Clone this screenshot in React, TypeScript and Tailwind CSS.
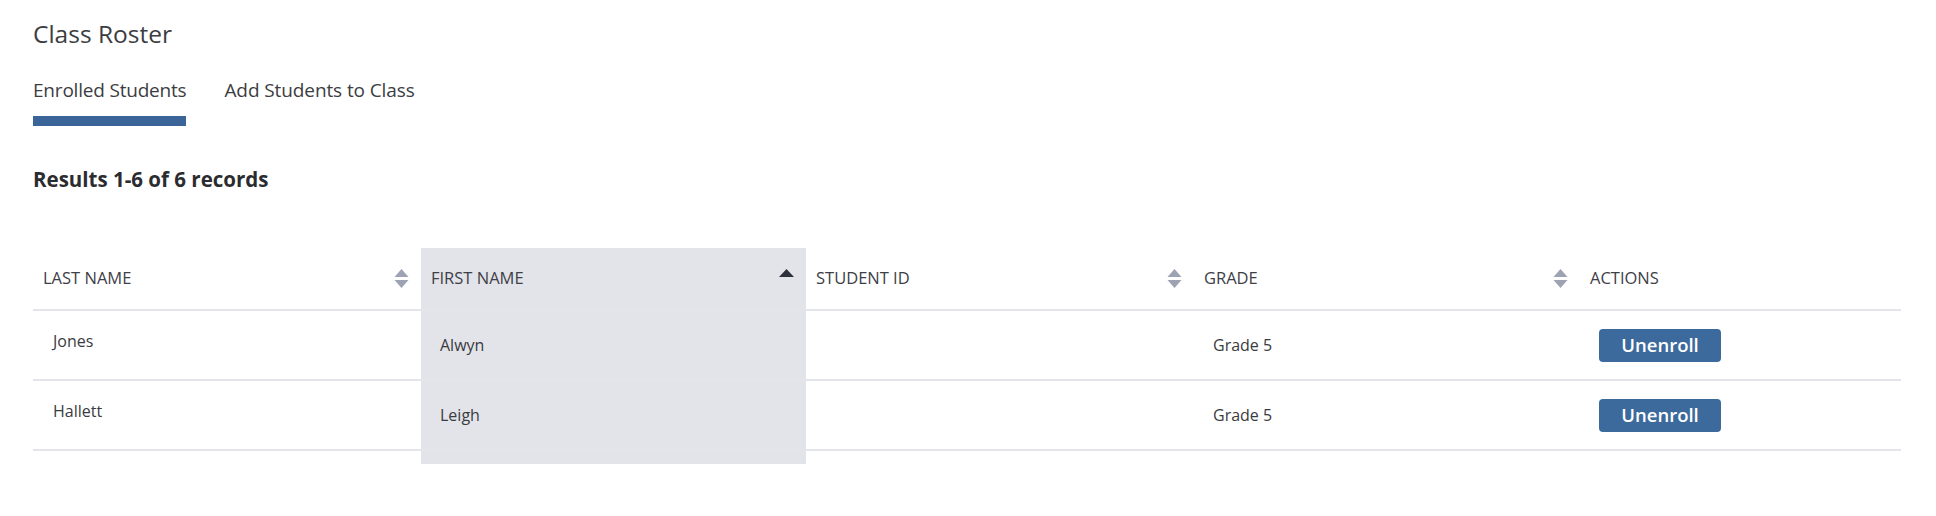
import React from 'react';

const students = [
  { last: 'Jones', first: 'Alwyn', id: '', grade: 'Grade 5' },
  { last: 'Hallett', first: 'Leigh', id: '', grade: 'Grade 5' },
];

function SortBoth() {
  return (
    <svg width="15" height="19" viewBox="0 0 15 19" className="shrink-0">
      <path d="M7.5 0 L14.5 8 L0.5 8 Z" fill="#9ea3b3" />
      <path d="M0.5 11 L14.5 11 L7.5 19 Z" fill="#9ea3b3" />
    </svg>
  );
}

function SortAsc() {
  return (
    <svg width="15" height="19" viewBox="0 0 15 19" className="shrink-0">
      <path d="M7.5 0 L15 8 L0 8 Z" fill="#2c303b" />
    </svg>
  );
}

function HeaderCell({ label, sort, active }: { label: string; sort?: 'both' | 'asc'; active?: boolean }) {
  return (
    <th className={`h-[62px] p-0 text-left align-middle font-normal ${active ? 'bg-[#e3e4e9]' : ''}`}>
      <div className="flex items-center justify-between pl-[10px] pr-[12px]">
        <span className="text-[16.5px] text-[#3e4047]">{label}</span>
        {sort === 'both' && <SortBoth />}
        {sort === 'asc' && <SortAsc />}
      </div>
    </th>
  );
}

export default function App() {
  return (
    <div className="min-h-[516px] bg-white pl-[33px] pr-[35px] text-[#3a3b40]" style={{ fontFamily: '"Open Sans", "Noto Sans", sans-serif' }}>
      <h1 className="pt-[18px] text-[24.5px] leading-[32px] font-normal text-[#3c3d42]">Class Roster</h1>

      <div className="mt-[28px] flex gap-[38px]">
        <div className="flex flex-col">
          <span className="text-[19px] leading-[24px] text-[#3c3d42] tracking-[-0.2px]">Enrolled Students</span>
          <div className="mt-[14px] h-[10px] w-full bg-[#3b6598]" />
        </div>
        <span className="text-[19px] leading-[24px] text-[#3c3d42] tracking-[-0.1px]">Add Students to Class</span>
      </div>

      <p className="mt-[41px] text-[20.5px] leading-[24px] font-bold text-[#2b2c30]">Results 1-6 of 6 records</p>

      <table className="mt-[57px] w-[1868px] table-fixed border-collapse">
        <colgroup>
          <col className="w-[388px]" />
          <col className="w-[385px]" />
          <col className="w-[388px]" />
          <col className="w-[386px]" />
          <col className="w-[321px]" />
        </colgroup>
        <thead>
          <tr className="border-b-2 border-[#e4e5ea]">
            <HeaderCell label="LAST NAME" sort="both" />
            <HeaderCell label="FIRST NAME" sort="asc" active />
            <HeaderCell label="STUDENT ID" sort="both" />
            <HeaderCell label="GRADE" sort="both" />
            <HeaderCell label="ACTIONS" />
          </tr>
        </thead>
        <tbody>
          {students.map((s) => (
            <tr key={s.last} className="border-b-2 border-[#e4e5ea]">
              <td className="h-[70px] pl-[20px] pb-[8px] align-middle text-[16px] text-[#3a3b40]">{s.last}</td>
              <td className="h-[70px] bg-[#e3e4e9] pl-[19px] align-middle text-[16px] text-[#3a3b40]">{s.first}</td>
              <td className="h-[70px] pl-[19px] align-middle text-[16px] text-[#3a3b40]">{s.id}</td>
              <td className="h-[70px] pl-[19px] align-middle text-[16px] text-[#3a3b40]">{s.grade}</td>
              <td className="h-[70px] pl-[19px] align-middle">
                <button className="h-[33px] w-[122px] rounded-[4px] bg-[#3d6a9c] text-[18.5px] font-semibold text-white">
                  Unenroll
                </button>
              </td>
            </tr>
          ))}
          <tr>
            <td className="h-[14px] p-0" />
            <td className="h-[14px] bg-[#e3e4e9] p-0" />
            <td className="h-[14px] p-0" />
            <td className="h-[14px] p-0" />
            <td className="h-[14px] p-0" />
          </tr>
        </tbody>
      </table>
    </div>
  );
}
